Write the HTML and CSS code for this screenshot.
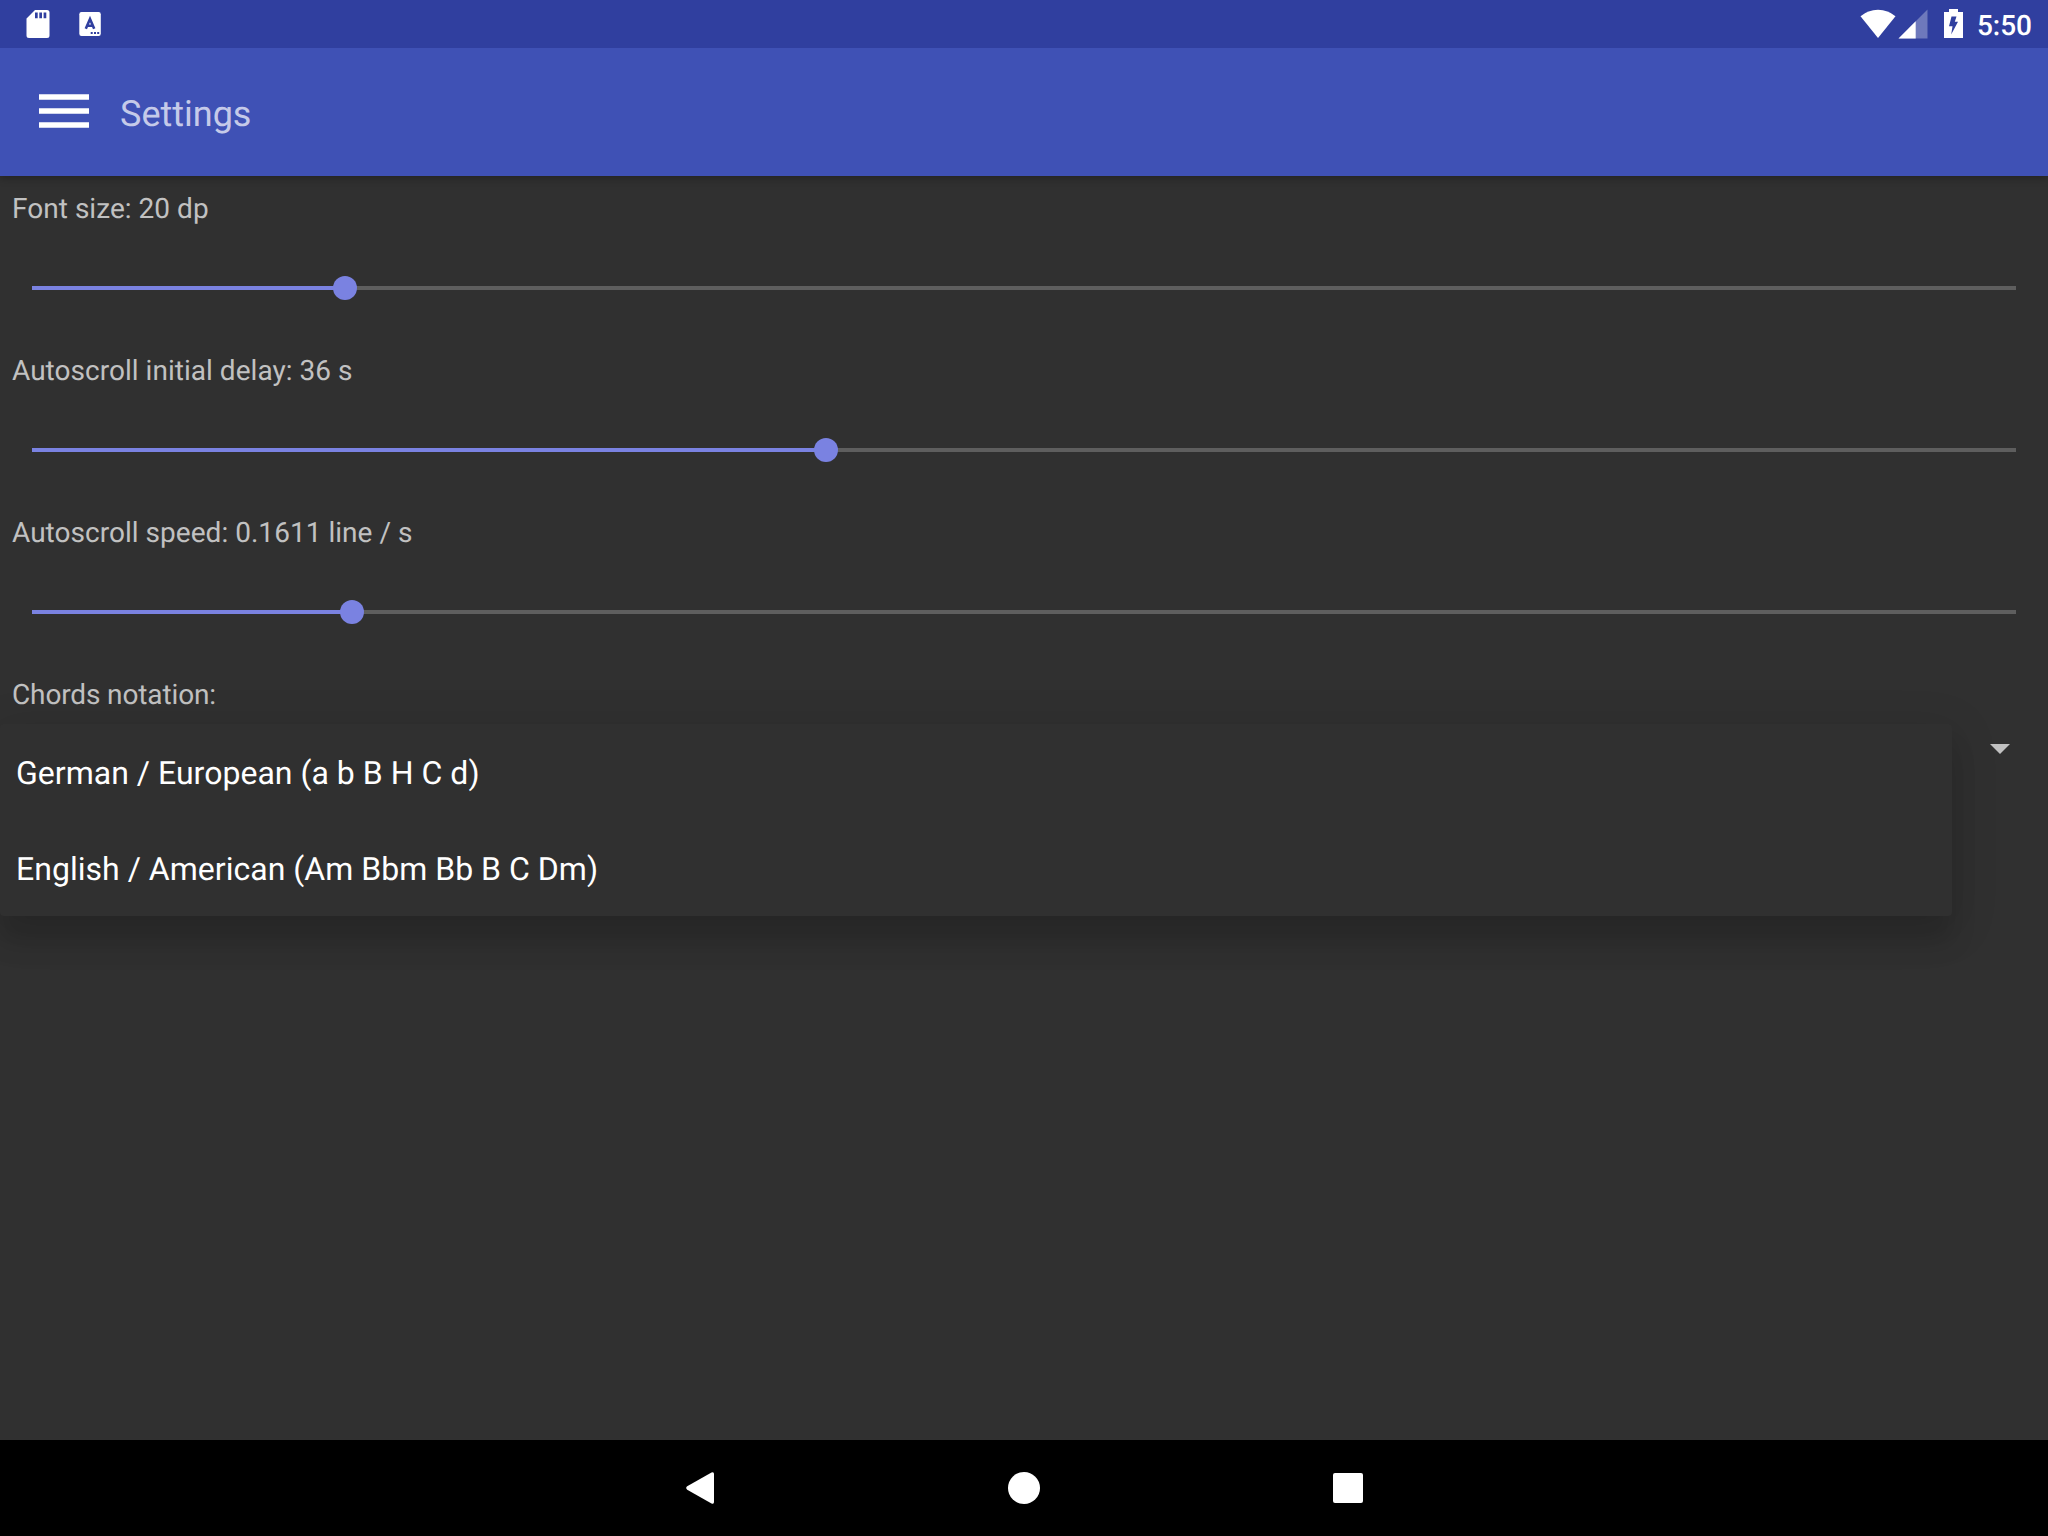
FILE: index.html
```html
<!DOCTYPE html>
<html lang="en">
<head>
<meta charset="utf-8">
<title>Settings</title>
<link rel="stylesheet" href="styles.css">
</head>
<body>
<div class="screen">
  <header class="status-bar">
    <div class="notifications">
      <svg width="24" height="28" viewBox="0 0 24 28"><path fill="#fff" fill-rule="evenodd" d="M9 0H21Q23.500 0 23.500 2.500V25.500Q23.500 28 21 28H3Q.5 28 .5 25.500V8.500ZM9 2.500V8.300H11.700V2.500ZM13.300 2.500V8.300H16V2.500ZM17.600 2.500V8.300H20.300V2.500Z"/></svg>
      <svg width="22" height="24" viewBox="0 0 22 24"><rect x=".3" width="21.500" height="24" rx="2.200" fill="#fff"/><path d="M6.800 16.800L11 7L15.200 16.800M8 13.800H13.500" fill="none" stroke="#303f9f" stroke-width="2.600"/><path fill="#303f9f" d="M11.700 20h2v2h-2zM15 20h2v2h-2zM18.200 20h2v2h-2z"/></svg>
    </div>
    <div class="system">
      <svg width="104" height="30" viewBox="1860 9 104 30">
        <path fill="#fff" d="M1878 38L1860.500 16.200Q1868 9.700 1878 9.700T1895.500 16.200Z"/>
        <path fill="#fff" fill-opacity=".3" d="M1898.500 38.500L1927.500 9.500V38.500Z"/>
        <path fill="#fff" d="M1898.500 38.500L1915.700 21.300V38.500Z"/>
        <path fill="#fff" d="M1949 9h9v3h5v26h-19V12h5z"/>
        <path fill="#303f9f" d="M1951.500 16.500H1956.500L1954.800 21.800H1958L1951.200 34.500L1952.500 26.300H1949Z"/>
      </svg>
      <span class="clock">5:50</span>
    </div>
  </header>
  <div class="toolbar">
    <svg class="menu-icon" width="50" height="34" viewBox="0 0 50 34"><path fill="#fff" d="M0 .3H50V5.700H0ZM0 14.300H50V19.700H0ZM0 28.300H50V33.700H0Z"/></svg>
    <h1 class="title">Settings</h1>
  </div>
  <main class="content">
    <section class="setting">
      <div class="label">Font size: 20 dp</div>
      <div class="slider"><div class="fill" style="width:15.780%"></div><div class="thumb"></div><div class="rest"></div></div>
    </section>
    <section class="setting">
      <div class="label">Autoscroll initial delay: 36 s</div>
      <div class="slider"><div class="fill" style="width:40%"></div><div class="thumb"></div><div class="rest"></div></div>
    </section>
    <section class="setting">
      <div class="label">Autoscroll speed: 0.1611 line / s</div>
      <div class="slider"><div class="fill" style="width:16.110%"></div><div class="thumb"></div><div class="rest"></div></div>
    </section>
    <section class="notation">
      <div class="label">Chords notation:</div>
      <div class="spinner"><svg width="20" height="10" viewBox="0 0 20 10"><path fill="#c1c1c1" d="M0 0H20L10 10Z"/></svg></div>
      <ul class="dropdown">
        <li>German / European (a b B H C d)</li>
        <li>English / American (Am Bbm Bb B C Dm)</li>
      </ul>
    </section>
  </main>
  <nav class="nav-bar">
    <svg width="32" height="32" viewBox="0 0 32 32"><path fill="#fff" d="M3.200 14.300L27.500.6Q30 -.4 30 2V30Q30 32.400 27.500 31.400L3.200 17.700Q1.200 16 3.200 14.300Z"/></svg>
    <svg width="32" height="32" viewBox="0 0 32 32"><circle cx="16" cy="16" r="16" fill="#fff"/></svg>
    <svg width="32" height="32" viewBox="0 0 32 32"><rect x="1" y="1" width="30" height="30" rx="2" fill="#fff"/></svg>
  </nav>
</div>
</body>
</html>
```
FILE: styles.css
```css
* { box-sizing: border-box; }
body { margin: 0; font-family: Roboto, sans-serif; background: #303030; text-rendering: geometricPrecision; }
svg { display: block; }
.screen { width: 2048px; height: 1536px; display: flex; flex-direction: column; overflow: hidden; }

.status-bar { height: 48px; flex: none; background: #303f9f; display: flex; justify-content: space-between; align-items: center; padding: 0 16px 0 26px; position: relative; z-index: 2; }
.notifications { display: flex; align-items: center; gap: 29px; }
.system { display: flex; align-items: center; gap: 13px; }
.clock { color: #fff; font-size: 28px; line-height: 32px; font-weight: 500; padding-top: 3px; }

.toolbar { height: 128px; flex: none; background: #3f51b5; display: flex; align-items: center; padding-left: 39px; position: relative; box-shadow: 0 2px 8px rgba(0, 0, 0, .3); }
.menu-icon { margin-top: -2px; }
.title { margin: 3px 0 0 31px; font-size: 36px; line-height: 42px; font-weight: 400; color: #c5cae9; }

.content { flex: 1; padding-top: 12px; }
.setting { height: 162px; }
.label { padding: 1px 0 0 12px; height: 40px; font-size: 28px; line-height: 40px; letter-spacing: .03px; color: #c1c1c1; }
.slider { display: flex; align-items: center; height: 24px; margin: 48px 32px 0; }
.fill { height: 4px; background: #7a82e1; }
.thumb { width: 24px; height: 24px; flex: none; margin: 0 -12px; border-radius: 50%; background: #7a82e1; position: relative; z-index: 1; }
.rest { flex: 1; height: 4px; background: #5e5e5e; }
.notation { position: relative; }
.notation .label { letter-spacing: -.13px; }
.spinner { display: flex; justify-content: flex-end; padding: 30px 38px 0 0; }
.dropdown { position: absolute; left: 0; top: 50px; width: 1952px; margin: 0; padding: 0; list-style: none; background: #303030; border-radius: 4px; box-shadow: 0 26px 26px rgba(0, 0, 0, .12), 0 10px 44px 6px rgba(0, 0, 0, .11); }
.dropdown li { height: 96px; padding: 1px 0 0 16px; font-size: 32px; line-height: 96px; letter-spacing: .02px; color: #fff; }

.nav-bar { height: 96px; flex: none; background: #000; display: flex; justify-content: center; align-items: center; gap: 292px; }
```
